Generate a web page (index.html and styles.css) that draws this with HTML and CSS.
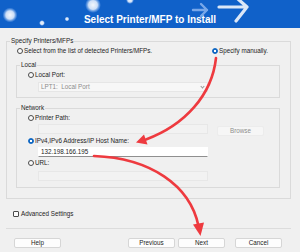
FILE: index.html
```html
<!DOCTYPE html>
<html lang="en">
<head>
<meta charset="utf-8">
<title>Select Printer/MFP to Install</title>
<link rel="stylesheet" href="styles.css">
</head>
<body>
<div class="dialog">
  <header class="banner">
    <svg class="banner-art" width="300" height="28" viewBox="0 0 300 28" aria-hidden="true">
      <defs>
        <radialGradient id="bk">
          <stop offset="0" stop-color="#ffffff" stop-opacity="0.95"/>
          <stop offset="0.55" stop-color="#eef5ff" stop-opacity="0.85"/>
          <stop offset="1" stop-color="#a9ccff" stop-opacity="0"/>
        </radialGradient>
      </defs>
      <circle cx="10" cy="15" r="7.5" fill="url(#bk)"/>
      <circle cx="42" cy="23" r="3" fill="url(#bk)"/>
      <circle cx="67" cy="19" r="2.4" fill="url(#bk)"/>
      <circle cx="93" cy="5" r="8" fill="url(#bk)"/>
      <circle cx="130" cy="0" r="4" fill="url(#bk)"/>
      <g fill="none" stroke-linecap="round" stroke-linejoin="round">
        <path d="M193 10H207M201 4l6 6-6 6" stroke="#bcd6ff" stroke-opacity="0.6" stroke-width="2.4"/>
        <path d="M219 7H247M238 -1l9 8-11 14" stroke="#ffffff" stroke-opacity="0.85" stroke-width="3.2"/>
      </g>
    </svg>
    <h1 class="title">Select Printer/MFP to Install</h1>
  </header>

  <main class="content">
    <fieldset class="group outer">
      <legend>Specify Printers/MFPs</legend>
      <div class="group-body outer-body">
        <div class="mode-row">
          <label class="radio"><span class="dot"></span>Select from the list of detected Printers/MFPs.</label>
          <label class="radio"><span class="dot on"></span>Specify manually.</label>
        </div>

        <fieldset class="group inner local">
          <legend>Local</legend>
          <div class="group-body local-body">
            <label class="radio"><span class="dot"></span>Local Port:</label>
            <div class="field select disabled"><span>LPT1:&nbsp;&nbsp;Local Port</span><span class="chev"></span></div>
          </div>
        </fieldset>

        <fieldset class="group inner network">
          <legend>Network</legend>
          <div class="group-body network-body">
            <label class="radio"><span class="dot"></span>Printer Path:</label>
            <div class="path-row">
              <div class="field faint"></div>
              <button class="btn browse" type="button">Browse</button>
            </div>
            <label class="radio ip-radio"><span class="dot on"></span>IPv4,IPv6 Address/IP Host Name:</label>
            <div class="field active">132.198.166.195</div>
            <label class="radio url-radio"><span class="dot"></span>URL:</label>
            <div class="field faint url-field"></div>
          </div>
        </fieldset>
      </div>
    </fieldset>

    <label class="check"><span class="box"></span>Advanced Settings</label>
  </main>

  <footer class="buttons">
    <button class="btn" type="button">Help</button>
    <div class="nav">
      <button class="btn" type="button">Previous</button>
      <button class="btn" type="button">Next</button>
      <button class="btn cancel" type="button">Cancel</button>
    </div>
  </footer>
</div>

<svg class="annotations" width="300" height="252" viewBox="0 0 300 252" aria-hidden="true">
  <g fill="none" stroke="#ee3a3f" stroke-width="2.6" stroke-linecap="round">
    <path d="M216 58C212 95 185 125 146 139.5"/>
    <path d="M94 156C150 158 190 185 198.5 226"/>
  </g>
  <g fill="#ee3a3f">
    <polygon points="136,142.5 144,134.5 147.5,144.5"/>
    <polygon points="200.5,236 193,224.5 204,222.5"/>
  </g>
</svg>
</body>
</html>
```

FILE: styles.css
```css
* { box-sizing: border-box; }

html, body {
  margin: 0;
  padding: 0;
}

body {
  width: 300px;
  height: 252px;
  overflow: hidden;
  position: relative;
  background: #f0f0f0;
  font-family: "Liberation Sans", Arial, sans-serif;
  font-size: 6.3px;
  color: #1c1c1c;
}

.dialog {
  display: flex;
  flex-direction: column;
  height: 252px;
}

/* Banner */
.banner {
  position: relative;
  height: 28px;
  flex: none;
  background: #1061c9;
  display: flex;
  justify-content: center;
  padding-top: 14px;
  overflow: hidden;
}

.banner-art {
  position: absolute;
  left: 0;
  top: 0;
}

.title {
  position: relative;
  margin: 0;
  font-size: 10px;
  line-height: 12px;
  font-weight: bold;
  color: #ffffff;
  white-space: nowrap;
}

/* Content */
.content {
  padding: 9px 9px 0 6px;
}

.group {
  margin: 0;
  padding: 0;
  min-width: 0;
  border: 1px solid #dadada;
}

.group > legend {
  margin-left: 3px;
  padding: 0 1px;
  line-height: 8px;
  color: #1c1c1c;
}

.outer-body {
  padding: 2px 10px 10px 9px;
}

.mode-row {
  display: grid;
  grid-template-columns: 195px auto;
  padding-left: 1px;
}

.inner {
  margin-top: 6px;
}

.local-body {
  padding: 2px 0 5px 11px;
}

.network-body {
  padding: 2px 0 6px 11px;
}

.radio {
  display: flex;
  align-items: center;
  line-height: 8px;
  height: 8px;
  white-space: nowrap;
}

.dot {
  flex: none;
  width: 6px;
  height: 6px;
  margin-right: 1px;
  border: 0.8px solid #4a4a4a;
  border-radius: 50%;
  background: #fbfbfb;
}

.dot.on {
  border-color: #0a64c2;
  background: radial-gradient(circle, #ffffff 0 1.1px, #0a64c2 1.6px);
}

/* Fields */
.field {
  margin-left: 10px;
  width: 170px;
  height: 10px;
  line-height: 8px;
  padding: 0 2px;
  border: 1px solid #e6e6e6;
  background: #f4f4f4;
  white-space: nowrap;
}

.select {
  margin-top: 3px;
  display: flex;
  justify-content: space-between;
  align-items: center;
  background: #f7f7f7;
  color: #8c8c8c;
}

.chev {
  width: 3px;
  height: 3px;
  margin: 0 1px 2px 0;
  border-right: 0.8px solid #9a9a9a;
  border-bottom: 0.8px solid #9a9a9a;
  transform: rotate(45deg);
}

.path-row {
  display: flex;
  align-items: flex-start;
  margin-top: 2px;
}

.path-row .field {
  margin-left: 10px;
}

.faint {
  background: #f2f2f2;
  border-color: #e7e7e7;
}

.active {
  margin-top: 2px;
  background: #ffffff;
  border-color: #ffffff;
  border-bottom-color: #8f8f8f;
  color: #1c1c1c;
}

.ip-radio {
  margin-top: 1px;
}

.url-radio {
  margin-top: 2px;
}

.url-field {
  margin-top: 4px;
}

/* Buttons */
.btn {
  width: 47px;
  height: 10px;
  padding: 0;
  margin: 0;
  font-family: inherit;
  font-size: 6.3px;
  line-height: 8px;
  color: #1c1c1c;
  text-align: center;
  background: #fdfdfd;
  border: 1px solid #d6d6d6;
  border-radius: 2px;
}

.browse {
  margin-top: 2px;
  margin-left: 9px;
  background: #f6f6f6;
  border-color: #ececec;
  color: #8d8d8d;
}

/* Checkbox */
.check {
  display: flex;
  align-items: center;
  margin-top: 11px;
  height: 8px;
  line-height: 8px;
}

.box {
  flex: none;
  width: 6px;
  height: 6px;
  margin: 0 2px 0 7px;
  border: 0.8px solid #4a4a4a;
  border-radius: 1px;
  background: #fbfbfb;
}

/* Footer */
.buttons {
  display: flex;
  justify-content: space-between;
  margin: 10px 9px 0 6px;
  padding: 9px 9px 0 8px;
  border-top: 1px solid #dcdcdc;
}

.nav {
  display: flex;
  gap: 3px;
}

.cancel {
  margin-left: 7px;
}

/* Overlay annotation arrows */
.annotations {
  position: absolute;
  left: 0;
  top: 0;
  pointer-events: none;
}
```
